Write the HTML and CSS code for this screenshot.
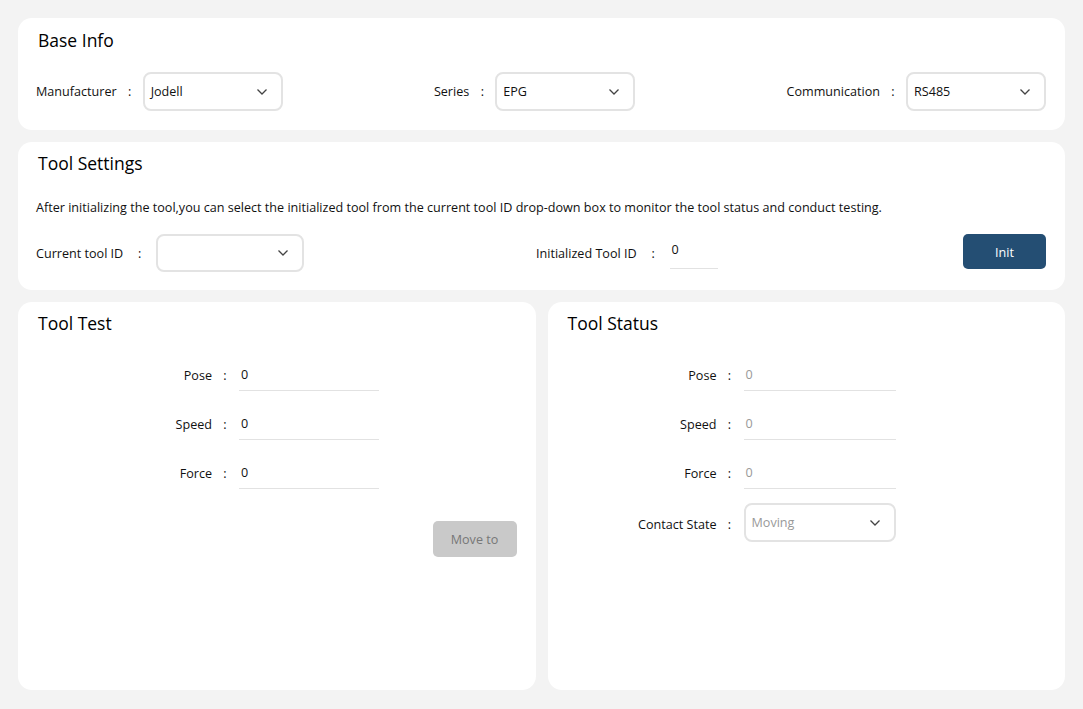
FILE: index.html
```html
<html lang="en">
<head>
  <meta charset="UTF-8" />
  <meta name="viewport" content="width=device-width, initial-scale=1" />
  <title>Tool Config</title>
  <link rel="stylesheet" href="styles.css">
</head>
<body>
  <section class="card card-base">
    <h2>Base Info</h2>
    <div class="row-spread">
      <div class="field">
        <span class="label">Manufacturer</span><span class="colon">:</span>
        <div class="dropdown w-140"><span>Jodell</span>
          <svg viewBox="0 0 12 8" width="12" height="8"><path d="M1.5 1.5 6 6l4.5-4.5" /></svg>
        </div>
      </div>
      <div class="field">
        <span class="label">Series</span><span class="colon">:</span>
        <div class="dropdown w-140"><span>EPG</span>
          <svg viewBox="0 0 12 8" width="12" height="8"><path d="M1.5 1.5 6 6l4.5-4.5" /></svg>
        </div>
      </div>
      <div class="field">
        <span class="label">Communication</span><span class="colon">:</span>
        <div class="dropdown w-140"><span>RS485</span>
          <svg viewBox="0 0 12 8" width="12" height="8"><path d="M1.5 1.5 6 6l4.5-4.5" /></svg>
        </div>
      </div>
    </div>
  </section>

  <section class="card card-settings">
    <h2>Tool Settings</h2>
    <p class="hint">After initializing the tool,you can select the initialized tool from the current tool ID drop-down box to monitor the tool status and conduct testing.</p>
    <div class="settings-row">
      <div class="field">
        <span class="label">Current tool ID</span><span class="colon wide">:</span>
        <div class="dropdown w-148 short"><span></span>
          <svg viewBox="0 0 12 8" width="12" height="8"><path d="M1.5 1.5 6 6l4.5-4.5" /></svg>
        </div>
      </div>
      <div class="field">
        <span class="label">Initialized Tool ID</span><span class="colon wide">:</span>
        <div class="line-input w-48">0</div>
      </div>
      <button type="button" class="btn-primary">Init</button>
    </div>
  </section>

  <div class="panels">
    <section class="card panel">
      <h2>Tool Test</h2>
      <div class="form-grid test-form">
        <span class="label">Pose</span><span class="colon">:</span><div class="line-input">0</div>
        <span class="label">Speed</span><span class="colon">:</span><div class="line-input">0</div>
        <span class="label">Force</span><span class="colon">:</span><div class="line-input">0</div>
      </div>
      <div class="actions">
        <button type="button" class="btn-disabled">Move to</button>
      </div>
    </section>
    <section class="card panel">
      <h2>Tool Status</h2>
      <div class="form-grid status-form">
        <span class="label">Pose</span><span class="colon">:</span><div class="line-input muted">0</div>
        <span class="label">Speed</span><span class="colon">:</span><div class="line-input muted">0</div>
        <span class="label">Force</span><span class="colon">:</span><div class="line-input muted">0</div>
        <span class="label">Contact State</span><span class="colon">:</span>
        <div class="dropdown state muted"><span>Moving</span>
          <svg viewBox="0 0 12 8" width="12" height="8"><path d="M1.5 1.5 6 6l4.5-4.5" /></svg>
        </div>
      </div>
    </section>
  </div>
</body>
</html>
```

FILE: styles.css
```css
/* Base */
body {
  margin: 0;
  padding: 18px 18px 19px;
  background-color: #f3f3f3;
  font-family: "Open Sans", "Noto Sans", "Noto Sans CJK SC", sans-serif;
  font-size: 12.6px;
  color: #111;
  display: flex;
  flex-direction: column;
  gap: 12px;
}
h2 {
  margin: 0 0 0 2px;
  font-size: 17.5px;
  font-weight: 400;
  line-height: 24px;
  color: #000;
}
.card {
  box-sizing: border-box;
  background-color: #fff;
  border-radius: 14px;
  padding: 10px 19px 19px 18px;
}

/* Base info */
.card-base {
  height: 112px;
}
.row-spread {
  display: flex;
  justify-content: space-between;
  align-items: center;
  margin-top: 20px;
}
.field {
  display: flex;
  align-items: center;
}
.colon {
  display: inline-block;
  width: 26px;
  text-align: center;
}
.colon.wide {
  width: 33px;
}
.dropdown {
  box-sizing: border-box;
  height: 39px;
  border: 2px solid #e3e3e3;
  border-radius: 8px;
  padding: 0 13px 0 6px;
  display: flex;
  align-items: center;
  justify-content: space-between;
  background: #fff;
}
.dropdown svg path {
  fill: none;
  stroke: #444;
  stroke-width: 1.3;
}
.dropdown.short {
  height: 38px;
}
.w-140 { width: 140px; }
.w-148 { width: 148px; }
.w-48 { width: 48px; }

/* Tool settings */
.card-settings {
  padding-top: 9px;
  height: 148px;
}
.hint {
  margin: 23px 0 0;
  line-height: 20px;
}
.settings-row {
  display: grid;
  grid-template-columns: 500px 1fr auto;
  align-items: center;
  margin-top: 16px;
}
.line-input {
  box-sizing: border-box;
  height: 31px;
  padding: 0 2px;
  line-height: 30px;
  border-bottom: 1px solid #e2e2e2;
}
.settings-row .line-input {
  height: 34px;
  line-height: 30px;
  margin-top: -2px;
}
.btn-primary {
  width: 83px;
  height: 35px;
  border: none;
  border-radius: 5px;
  background-color: #244e73;
  color: #fff;
  font-family: inherit;
  font-size: 12.6px;
  margin-top: -3px;
  padding-top: 2px;
}

/* Panels */
.panels {
  display: grid;
  grid-template-columns: 1fr 1fr;
  gap: 12px;
}
.panel {
  height: 388px;
  padding-top: 9px;
}
.form-grid {
  display: grid;
  grid-template-columns: 100px 27px 140px;
  row-gap: 18px;
  align-items: center;
  margin-top: 25px;
}
.form-grid .label {
  text-align: right;
}
.test-form {
  margin-left: 76px;
}
.status-form {
  margin-left: 51px;
  grid-template-columns: 100px 27px 152px;
}
.status-form .dropdown {
  margin-top: -4px;
}
.muted {
  color: #999;
}
.actions {
  display: flex;
  justify-content: flex-end;
  margin-top: 32px;
}
.btn-disabled {
  width: 84px;
  height: 36px;
  border: none;
  border-radius: 5px;
  background-color: #c9c9c9;
  color: #777;
  font-family: inherit;
  font-size: 12.6px;
}
```
